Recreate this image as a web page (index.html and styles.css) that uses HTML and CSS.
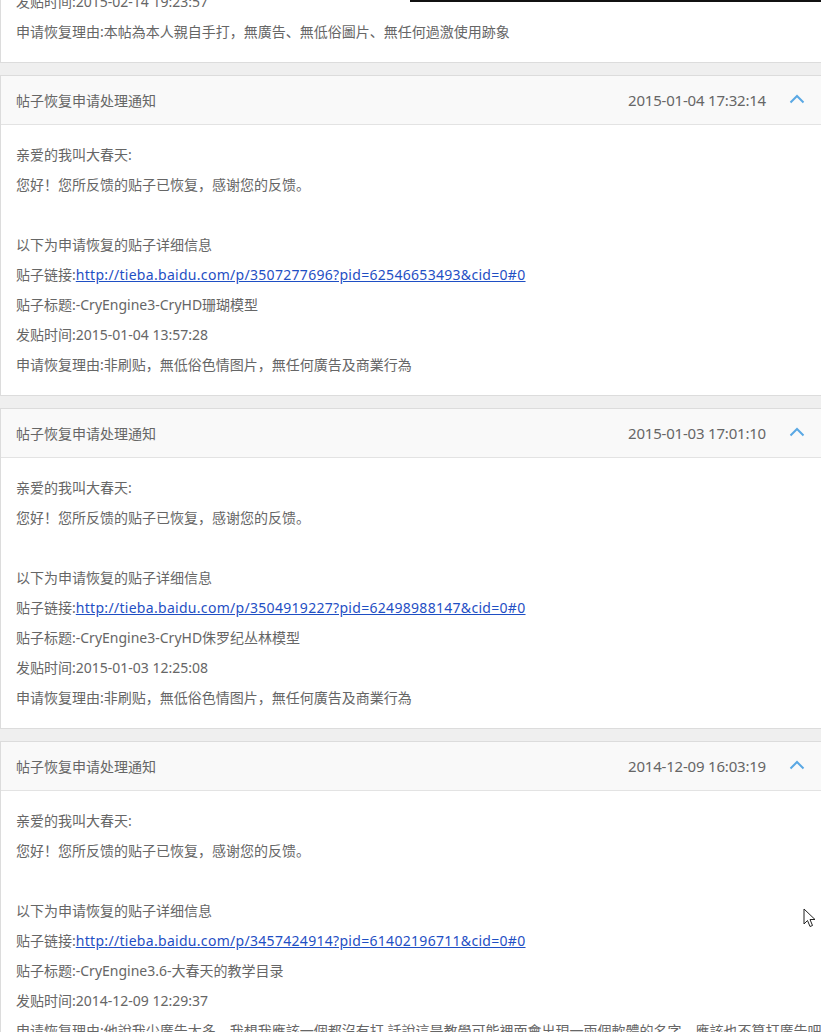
FILE: index.html
```html
<!DOCTYPE html>
<html lang="zh-CN">
<head>
<meta charset="utf-8">
<title>帖子恢复申请处理通知</title>
<link rel="stylesheet" href="styles.css">
</head>
<body>
<div class="topline"></div>
<div class="list">
  <section class="card card-partial">
    <div class="card-body">
      <p>发贴时间:2015-02-14 19:23:57</p>
      <p>申请恢复理由:本帖為本人親自手打，無廣告、無低俗圖片、無任何過激使用跡象</p>
    </div>
  </section>

  <section class="card">
    <header class="card-head">
      <span class="title">帖子恢复申请处理通知</span>
      <span class="date">2015-01-04 17:32:14</span>
      <svg class="chev" width="16" height="10" viewBox="0 0 16 10"><path d="M1.5 8.5 L8 2 L14.5 8.5" fill="none" stroke="#5aa8e4" stroke-width="2"/></svg>
    </header>
    <div class="card-body">
      <p>亲爱的我叫大春天:</p>
      <p>您好！您所反馈的贴子已恢复，感谢您的反馈。</p>
      <p class="blank"></p>
      <p>以下为申请恢复的贴子详细信息</p>
      <p>贴子链接:<a href="#">http://tieba.baidu.com/p/3507277696?pid=62546653493&amp;cid=0#0</a></p>
      <p>贴子标题:-CryEngine3-CryHD珊瑚模型</p>
      <p>发贴时间:2015-01-04 13:57:28</p>
      <p>申请恢复理由:非刷贴，無低俗色情图片，無任何廣告及商業行為</p>
    </div>
  </section>

  <section class="card">
    <header class="card-head">
      <span class="title">帖子恢复申请处理通知</span>
      <span class="date">2015-01-03 17:01:10</span>
      <svg class="chev" width="16" height="10" viewBox="0 0 16 10"><path d="M1.5 8.5 L8 2 L14.5 8.5" fill="none" stroke="#5aa8e4" stroke-width="2"/></svg>
    </header>
    <div class="card-body">
      <p>亲爱的我叫大春天:</p>
      <p>您好！您所反馈的贴子已恢复，感谢您的反馈。</p>
      <p class="blank"></p>
      <p>以下为申请恢复的贴子详细信息</p>
      <p>贴子链接:<a href="#">http://tieba.baidu.com/p/3504919227?pid=62498988147&amp;cid=0#0</a></p>
      <p>贴子标题:-CryEngine3-CryHD侏罗纪丛林模型</p>
      <p>发贴时间:2015-01-03 12:25:08</p>
      <p>申请恢复理由:非刷贴，無低俗色情图片，無任何廣告及商業行為</p>
    </div>
  </section>

  <section class="card">
    <header class="card-head">
      <span class="title">帖子恢复申请处理通知</span>
      <span class="date">2014-12-09 16:03:19</span>
      <svg class="chev" width="16" height="10" viewBox="0 0 16 10"><path d="M1.5 8.5 L8 2 L14.5 8.5" fill="none" stroke="#5aa8e4" stroke-width="2"/></svg>
    </header>
    <div class="card-body">
      <p>亲爱的我叫大春天:</p>
      <p>您好！您所反馈的贴子已恢复，感谢您的反馈。</p>
      <p class="blank"></p>
      <p>以下为申请恢复的贴子详细信息</p>
      <p>贴子链接:<a href="#">http://tieba.baidu.com/p/3457424914?pid=61402196711&amp;cid=0#0</a></p>
      <p>贴子标题:-CryEngine3.6-大春天的教学目录</p>
      <p>发贴时间:2014-12-09 12:29:37</p>
      <p>申请恢复理由:他說我少廣告太多，我想我應該一個都沒有打 話說這是教學可能裡面會出現一兩個軟體的名字，應該也不算打廣告吧</p>
    </div>
  </section>
</div>
<svg class="cursor" width="14" height="20" viewBox="0 0 14 20"><path d="M1 1 L1 16 L4.5 12.5 L7 18.5 L9.5 17.5 L7 11.5 L12 11.5 Z" fill="#fff" stroke="#222" stroke-width="1"/></svg>
</body>
</html>
```

FILE: styles.css
```css
html, body {
  margin: 0;
  padding: 0;
  overflow: hidden;
}
body {
  background: #efefef;
  font-family: "Noto Sans", "Noto Sans CJK SC", sans-serif;
  font-size: 14px;
  color: #666;
  position: relative;
  height: 1032px;
}
.topline {
  position: absolute;
  top: 0;
  left: 410px;
  right: 0;
  height: 2px;
  background: #111;
  z-index: 2;
}
.list {
  width: 823px;
  display: flex;
  flex-direction: column;
  gap: 12px;
}
.card {
  background: #fff;
  border: 1px solid #dcdcdc;
}
.card-partial {
  margin-top: -29px;
}
.card-head {
  height: 48px;
  background: #f9f9f9;
  border-bottom: 1px solid #e3e3e3;
  display: flex;
  align-items: center;
  padding: 0 17px 0 15px;
}
.title {
  flex: 1;
  font-family: "Noto Sans CJK SC", sans-serif;
  font-size: 14px;
}
.date {
  font-size: 15px;
  letter-spacing: -0.2px;
  margin-right: 23px;
}
.chev {
  display: block;
  margin-top: -3px;
}
.card-body {
  padding: 15px 15px;
}
.card-body p {
  margin: 0;
  line-height: 30px;
  height: 30px;
  white-space: nowrap;
}
.card-body a {
  color: #1f4fc4;
  text-decoration: underline;
  letter-spacing: 0.3px;
}
.cursor {
  position: absolute;
  left: 803px;
  top: 908px;
}
```
